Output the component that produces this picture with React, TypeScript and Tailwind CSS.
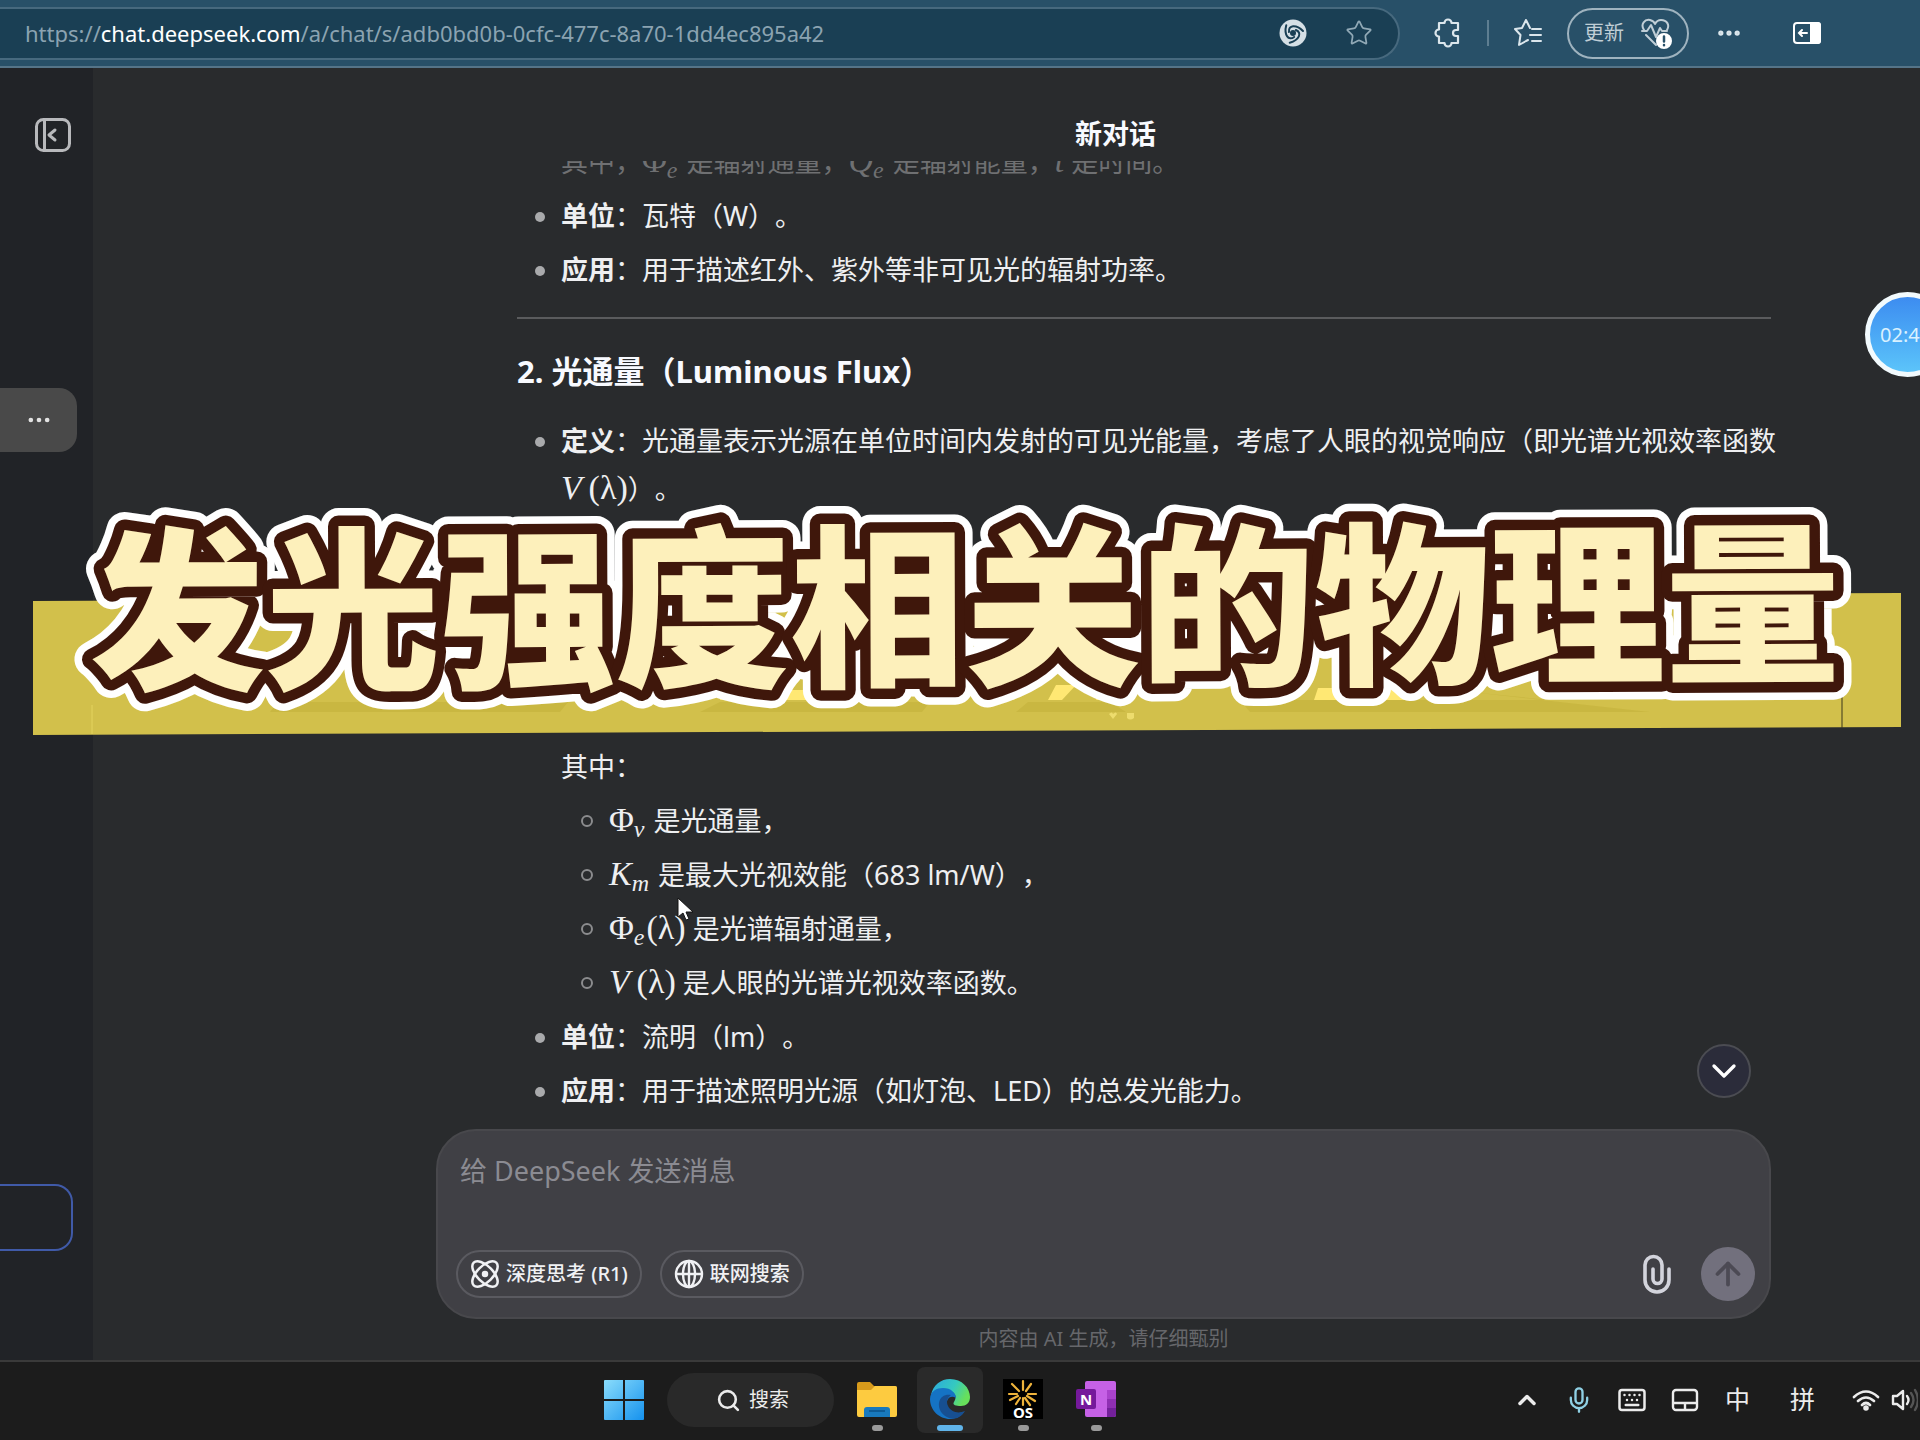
import type { ReactNode } from "react";
import { ArrowUp, ChevronDown, ChevronUp, Ellipsis, Keyboard, Mic, Search, Star } from "lucide-react";

function Var({ children, sub }: { children: ReactNode; sub?: string }) {
  return (
    <span className="font-['Liberation_Serif',serif] text-[34px] leading-none">
      {children}
      {sub && <sub className="mr-[2px] text-[24px] italic">{sub}</sub>}
    </span>
  );
}

function Bullet({ children }: { children: ReactNode }) {
  return (
    <li className="flex">
      <span className="mt-5 mr-4 ml-[18px] size-[10px] shrink-0 rounded-full bg-[#a9aaac]" />
      <div className="min-w-0 flex-1">{children}</div>
    </li>
  );
}

function SubBullet({ children }: { children: ReactNode }) {
  return (
    <li className="flex h-12 items-center">
      <span className="mr-4 ml-5 size-3 shrink-0 rounded-full border-2 border-[#8b8c8e]" />
      <div>{children}</div>
    </li>
  );
}

function BrowserBar() {
  return (
    <header className="flex h-[68px] shrink-0 items-center border-b-2 border-[#557488] bg-[#285068] text-[#dbe6ec]">
      <div className="flex h-[53px] min-w-0 flex-1 items-center rounded-r-full border-2 border-l-0 border-[#47697e] bg-[#1a3f54] pr-[25px] pl-[25px]">
        <div className="flex-1 truncate text-[22px] text-[#8ba3b1]">
          https://<span className="text-white">chat.deepseek.com</span>/a/chat/s/adb0bd0b-0cfc-477c-8a70-1dd4ec895a42
        </div>
        <div className="flex items-center gap-[38px]">
          <svg className="size-7" viewBox="0 0 28 28">
            <circle cx="14" cy="14" r="13.500" fill="#d5dfe5" />
            <g fill="none" stroke="#1a3f54" strokeWidth="2" strokeLinecap="round">
              <path id="blade" d="M10 13C9 6 17 5 24 12" />
              <use href="#blade" transform="rotate(120 14 14)" />
              <use href="#blade" transform="rotate(240 14 14)" />
            </g>
            <circle cx="14" cy="14" r="3" fill="#1a3f54" />
          </svg>
          <button aria-label="收藏"><Star className="size-7 text-[#91a9b6]" strokeWidth={1.5} /></button>
        </div>
      </div>
      <div className="flex w-[520px] shrink-0 items-center pl-[33px]">
        <button aria-label="扩展">
          <svg className="size-[30px]" viewBox="0 0 30 30" fill="none" stroke="currentColor" strokeWidth="2.2" strokeLinejoin="round">
            <path d="M8 5h3.500a3.500 3.500 0 0 1 7 0H25v7h-2a3 3 0 0 0 0 6h2v7h-6.500a3.500 3.500 0 0 1-7 0H6v-6.500a3.500 3.500 0 0 1 0-7V5Z" />
          </svg>
        </button>
        <span className="ml-6 h-[26px] w-[2px] bg-[#5e7e91]" />
        <button aria-label="收藏夹" className="ml-6">
          <svg className="size-[30px]" viewBox="0 0 30 30" fill="none" stroke="currentColor" strokeWidth="2" strokeLinejoin="round" strokeLinecap="round">
            <path d="M17 10l-4-8-4 8-7 1 5.500 6-1.500 10 7-4 2-1M19 11h9M17 17h11M19 23h9" />
          </svg>
        </button>
        <button className="ml-6 flex h-[51px] w-[122px] items-center justify-center gap-4 rounded-full border-2 border-[#9fb3bf] text-[20px] text-[#c0ced6]">
          更新
          <svg className="size-8" viewBox="0 0 32 32" fill="none" stroke="currentColor" strokeWidth="2" strokeLinecap="round" strokeLinejoin="round">
            <path d="M4 13C0 7 5 2 10 3q4 1 5 4 2-4 6-4c6 0 9 5 6 10M2 14h5l4-6 5 12 4-9 2 3h5M6 18l10 10" />
            <circle cx="24" cy="24" r="7" fill="white" stroke="white" />
            <path d="M24 19.500v5M24 28v.2" stroke="#285068" strokeWidth="2.500" />
          </svg>
        </button>
        <button aria-label="设置" className="ml-[26px]"><Ellipsis className="size-7" strokeWidth={2.5} /></button>
        <button aria-label="侧栏" className="ml-[50px]">
          <svg className="h-6 w-7" viewBox="0 0 28 24" fill="none" stroke="white" strokeWidth="2" strokeLinecap="round">
            <rect x="1" y="2" width="26" height="20" rx="3" />
            <path d="M18 2h7q2 0 2 2v16q0 2-2 2h-7Z" fill="white" />
            <path d="M14 12H6m3-3-3 3 3 3" />
          </svg>
        </button>
      </div>
    </header>
  );
}

function Sidebar() {
  return (
    <aside className="flex w-[93px] shrink-0 flex-col items-start bg-[#212327]">
      <button aria-label="收起边栏" className="mt-12 ml-[34px]">
        <svg className="size-[38px]" viewBox="0 0 38 38" fill="none" stroke="#b8b9bc" strokeWidth="3" strokeLinecap="round" strokeLinejoin="round">
          <rect x="2.500" y="3.500" width="33" height="31" rx="7" />
          <path d="M10.500 4v30M21 14l-6 5 6 5" />
        </svg>
      </button>
      <button aria-label="更多" className="mt-[234px] flex h-16 w-[77px] items-center justify-center rounded-r-[18px] bg-[#494949]">
        <Ellipsis className="size-7 text-[#e2e2e2]" />
      </button>
      <button aria-label="下载应用" className="mt-auto mb-[109px] h-[67px] w-[73px] rounded-r-[18px] border-2 border-l-0 border-[#405aa8]" />
    </aside>
  );
}

function Answer() {
  return (
    <article className="-mt-[23px] pl-[81px] text-[27px] leading-[48px] whitespace-nowrap text-[#eeeff1]">
      <p className="pl-[44px] text-[#6f7072]">
        其中，<Var sub="e">Φ</Var> 是辐射通量，<Var sub="e"><i>Q</i></Var> 是辐射能量，<Var><i>t</i></Var> 是时间。
      </p>
      <ul className="mt-[6px] flex flex-col gap-[6px]">
        <Bullet><strong>单位</strong>：瓦特（W）。</Bullet>
        <Bullet><strong>应用</strong>：用于描述红外、紫外等非可见光的辐射功率。</Bullet>
      </ul>
      <hr className="mt-[23px] border-t-2 border-[#5a5b5d]" />
      <h3 className="mt-[28px] text-[31px] font-bold text-[#f8faff]">2. 光通量（Luminous Flux）</h3>
      <ul className="mt-[22px] flex flex-col gap-[6px]">
        <Bullet>
          <p>
            <strong>定义</strong>：光通量表示光源在单位时间内发射的可见光能量，考虑了人眼的视觉响应（即光谱光视效率函数
            <br />
            <Var><i>V</i>&thinsp;(λ)</Var>）。
          </p>
        </Bullet>
        <li className="mt-[224px] pl-[44px]">
          其中：
          <ul className="mt-[6px] flex flex-col gap-[6px]">
            <SubBullet><Var sub="v">Φ</Var> 是光通量，</SubBullet>
            <SubBullet><Var sub="m"><i>K</i></Var> 是最大光视效能（683 lm/W），</SubBullet>
            <SubBullet><Var sub="e">Φ</Var><Var>(λ)</Var> 是光谱辐射通量，</SubBullet>
            <SubBullet><Var><i>V</i>&thinsp;(λ)</Var> 是人眼的光谱光视效率函数。</SubBullet>
          </ul>
        </li>
        <Bullet><strong>单位</strong>：流明（lm）。</Bullet>
        <Bullet><strong>应用</strong>：用于描述照明光源（如灯泡、LED）的总发光能力。</Bullet>
      </ul>
    </article>
  );
}

function Composer() {
  return (
    <form className="flex h-[190px] flex-col rounded-[40px] border-2 border-[#48484c] bg-[#404045] px-[18px] pt-5 pb-4">
      <textarea
        aria-label="消息"
        placeholder="给 DeepSeek 发送消息"
        className="min-h-0 w-full flex-1 resize-none bg-transparent px-1 text-[27px] leading-10 outline-none placeholder:text-[#8b8b92]"
      />
      <div className="flex items-center text-[20px] text-[#f0f1f4]">
        <button type="button" className="flex h-12 items-center gap-[6px] rounded-full border-2 border-[#5a5a60] px-3 font-medium whitespace-nowrap">
          <svg className="size-[30px]" viewBox="0 0 30 30" fill="none" stroke="currentColor" strokeWidth="2.500">
            <ellipse cx="15" cy="15" rx="16" ry="8" transform="rotate(45 15 15)" />
            <ellipse cx="15" cy="15" rx="16" ry="8" transform="rotate(-45 15 15)" />
            <circle cx="15" cy="15" r="2" fill="currentColor" />
          </svg>
          深度思考 (R1)
        </button>
        <button type="button" className="ml-[18px] flex h-12 items-center gap-[6px] rounded-full border-2 border-[#5a5a60] px-3 font-medium whitespace-nowrap">
          <svg className="size-[30px]" viewBox="0 0 30 30" fill="none" stroke="currentColor" strokeWidth="2.400">
            <circle cx="15" cy="15" r="13" />
            <ellipse cx="15" cy="15" rx="6" ry="13" />
            <path d="M2 15h26M15 2v26" />
          </svg>
          联网搜索
        </button>
        <button type="button" aria-label="上传附件" className="ml-auto">
          <svg className="h-10 w-8" viewBox="0 0 32 40" fill="none" stroke="#d3d4dc" strokeWidth="3.600" strokeLinecap="round">
            <path d="M28 15v11a12 12 0 0 1-24 0V11a8.500 8.500 0 0 1 17 0v14a4.500 4.500 0 0 1-9 0V15" />
          </svg>
        </button>
        <button type="button" aria-label="发送" className="ml-7 mr-[-4px] flex size-[54px] items-center justify-center rounded-full bg-[#72707d]">
          <ArrowUp className="size-9 text-[#4c4a54]" strokeWidth={2.5} />
        </button>
      </div>
    </form>
  );
}

function TitleSticker() {
  return (
    <svg className="pointer-events-none absolute top-[490px] left-0 w-full" viewBox="0 0 1920 260">
      <path d="M33 111 1901 103V237L33 245Z" fill="#d2c04b" />
      <path d="M92 215v29" stroke="#e3d35e" />
      <path d="M1842 205v33" stroke="#3a371c" />
      <path d="M720 200h100v10H720ZM1005 200h17l-8 10h-17ZM1056 195h20l-14 15h-14ZM1100 198l8 12h-12ZM1318 198h88v12h-92Z" fill="#ffe873" />
      <path d="M1109 224q3-3 4 0 3-3 4 0l-4 5ZM1127 223v5q3 3 7 0v-5" fill="#eddc6d" />
      <path d="M278 212h290l-8 10H270ZM720 212h210l-8 10H700ZM1028 212h82l16 10h-110ZM1240 210h310l-80-8 180 20h-400Z" fill="#c9b741" />
      <g transform="rotate(-0.250 960 130)" strokeLinejoin="round">
        <use href="#sticker-title" fill="white" stroke="white" strokeWidth="36" />
        <use href="#sticker-title" fill="#3f170b" stroke="#3f170b" strokeWidth="21" />
        <g fill="#fdf0bb">
          <text id="sticker-title" x="90" y="183" className="font-['Noto_Sans_CJK_SC',sans-serif] text-[175px] font-black">
            发光强度相关的物理量
          </text>
        </g>
      </g>
    </svg>
  );
}

function TaskApp({ label, active, children }: { label: string; active?: boolean; children: ReactNode }) {
  return (
    <button
      aria-label={label}
      className={`flex h-[66px] w-[66px] flex-col items-center rounded-lg pt-3 ${active ? "bg-[#2a2a2a]" : ""}`}
    >
      {children}
      <span className={`mt-[6px] h-[6px] rounded-full ${active ? "w-[26px] bg-[#60b4ea]" : "w-[11px] bg-[#9a9a9a]"}`} />
    </button>
  );
}

function Taskbar() {
  return (
    <footer className="flex h-20 shrink-0 items-center border-t-2 border-[#3a3a3a] bg-[#1c1c1c] pr-[2px] pb-[2px] pl-[603px] text-[#ececec]">
      <button aria-label="开始">
        <svg className="size-[42px]" viewBox="0 0 42 42">
          <defs>
            <linearGradient id="win" x2="1" y2="1">
              <stop stopColor="#8adcfb" />
              <stop offset="1" stopColor="#1592ee" />
            </linearGradient>
          </defs>
          <path d="M2 1h18v19H1V2q0-1 1-1ZM22 1h18q1 0 1 1v18H22ZM1 22h19v19H2q-1 0-1-1ZM22 22h19v18q0 1-1 1H22Z" fill="url(#win)" />
        </svg>
      </button>
      <button className="ml-[22px] flex h-[54px] w-[167px] items-center justify-center gap-2 rounded-full bg-[#292929] pl-1 text-[20px]">
        <Search className="size-[25px]" strokeWidth={2.5} />
        搜索
      </button>
      <div className="ml-[10px] flex gap-[7px]">
        <TaskApp label="文件资源管理器">
          <svg className="size-10 shrink-0" viewBox="0 0 40 40">
            <path d="M0 5q0-2 2-2h11l4 4h21q2 0 2 2v8H0Z" fill="#d79a1b" />
            <path d="M0 11h14l4-4h20q2 0 2 2v27q0 2-2 2H2q-2 0-2-2Z" fill="#fdcb40" />
            <path d="M7 38v-7q0-3 3-3h20q3 0 3 3v7Z" fill="#1879bd" />
            <path d="M12 32h16" stroke="#0d5b96" strokeWidth="2" />
          </svg>
        </TaskApp>
        <TaskApp label="Edge" active>
          <svg className="size-10 shrink-0" viewBox="0 0 40 40">
            <defs>
              <linearGradient id="edge-a" x2="1" y2=".4">
                <stop stopColor="#2ba7df" />
                <stop offset=".6" stopColor="#35c9c0" />
                <stop offset="1" stopColor="#67e05b" />
              </linearGradient>
            </defs>
            <path d="M1 16C3 6 11 0 20 0c12 0 20 9 20 18 0 6-4 9-9 9s-9-1-7-4c4-6 0-11-7-12C9 10 3 13 1 16Z" fill="url(#edge-a)" />
            <path d="M0 20c0-8 7-11 13-11 8 0 13 5 13 10-5-3-10 0-9 7 1 7 8 10 17 7-4 5-9 7-14 7C9 40 0 31 0 20Z" fill="#1573c4" />
            <path d="M9 24c1-7 7-9 12-8-4 3-5 7-3 11 3 6 10 8 17 5-4 7-11 9-16 7-6-2-11-8-10-15Z" fill="#174f91" />
          </svg>
        </TaskApp>
        <TaskApp label="OS">
          <svg className="size-10 shrink-0" viewBox="0 0 40 40">
            <path d="M0 0h40v40H0Z" fill="black" />
            <g stroke="#eeb33b" strokeWidth="2.200" strokeLinecap="round">
              <path d="M20 11V2M23 12l5-7M25 15h8M24 17l8 5M22 19l5 7M20 19v7M17 19l-4 6M15 17l-8 4M14 15H6M16 12 9 5" />
            </g>
            <text x="20" y="39" textAnchor="middle" fill="white" className="font-['Noto_Sans',sans-serif] text-[15px] font-bold">OS</text>
          </svg>
        </TaskApp>
        <TaskApp label="OneNote">
          <svg className="size-10 shrink-0" viewBox="0 0 40 40">
            <rect x="9" y="2" width="31" height="36" rx="2" fill="#c661e6" />
            <path d="M31 11h9v9h-9Z" fill="#a942cb" />
            <path d="M31 20h9v9h-9Z" fill="#8f2fb3" />
            <path d="M31 29h9v7q0 2-2 2h-7Z" fill="#73209a" />
            <rect y="10" width="20" height="20" rx="2" fill="#75199b" />
            <text x="10" y="26" textAnchor="middle" fill="white" className="font-['Noto_Sans',sans-serif] text-[15px] font-bold">N</text>
          </svg>
        </TaskApp>
      </div>
      <div className="ml-auto flex items-center text-[25px]">
        <ChevronUp className="size-7" strokeWidth={3} />
        <Mic className="ml-6 size-7 text-[#8fd0e4]" />
        <Keyboard className="ml-6 size-[30px]" />
        <svg className="ml-6 size-7" viewBox="0 0 28 28" fill="none" stroke="currentColor" strokeWidth="2.400">
          <rect x="2" y="4" width="24" height="20" rx="3" />
          <path d="M2 17h24M14 17v7" />
        </svg>
        <span className="ml-[26px]">中</span>
        <span className="ml-10">拼</span>
        <svg className="ml-9 size-[30px]" viewBox="0 0 30 30" fill="none" stroke="currentColor" strokeWidth="2.600" strokeLinecap="round">
          <path d="M3 12q12-11 24 0M7 16q8-7 16 0M11 20q4-4 8 0" />
          <circle cx="15" cy="23" r="1.500" fill="currentColor" />
        </svg>
        <svg className="ml-[10px] h-7 w-[27px]" viewBox="0 0 27 28" fill="none" stroke="currentColor" strokeWidth="2.400" strokeLinejoin="round" strokeLinecap="round">
          <path d="M2 10v8h4l6 5V5l-6 5ZM16 10q3 4 0 8" />
          <path d="M20 7q5 7 0 14M24 4q6 10 0 20" stroke="#555" />
        </svg>
      </div>
    </footer>
  );
}

export default function App() {
  return (
    <div className="relative flex h-screen flex-col overflow-hidden bg-[#292b2d] font-['Noto_Sans','Noto_Sans_CJK_SC',sans-serif] [text-spacing-trim:space-all]">
      <BrowserBar />
      <div className="flex min-h-0 flex-1">
        <Sidebar />
        <main className="flex min-w-0 flex-1 flex-col pr-[149px] pl-[343px]">
          <h1 className="flex h-[93px] shrink-0 items-center justify-center pt-10 pl-6 text-[27px] font-bold text-[#f8faff]">
            新对话
          </h1>
          <div className="relative min-h-0 flex-1">
            <div className="-mr-4 h-full overflow-hidden pr-4">
              <Answer />
            </div>
            <button aria-label="回到底部" className="absolute right-5 bottom-[31px] flex size-[54px] items-center justify-center rounded-full border-2 border-[#4b4c52] bg-[#2b2c3a]">
              <ChevronDown className="size-10 text-white" />
            </button>
          </div>
          <Composer />
          <p className="flex h-[41px] shrink-0 items-center justify-center pb-[2px] text-[20px] text-[#66676b]">内容由 AI 生成，请仔细甄别</p>
        </main>
      </div>
      <Taskbar />

      <TitleSticker />

      {/* Recording timer */}
      <div className="absolute top-[292px] -right-[30px] flex size-[85px] items-center rounded-full border-[5px] border-[#f2fafd] bg-linear-to-t from-[#5cc4fa] to-[#3d8cf0] pl-[10px] text-[20px] text-[#d9f1ff]">
        02:4
      </div>

      {/* Mouse pointer */}
      <svg className="absolute top-[897px] left-[677px] h-6 w-[18px]" viewBox="0 0 18 24" fill="white" stroke="#151515">
        <path d="M1 1v19l5-4 3 7 3-1-3-7h7Z" />
      </svg>
    </div>
  );
}
